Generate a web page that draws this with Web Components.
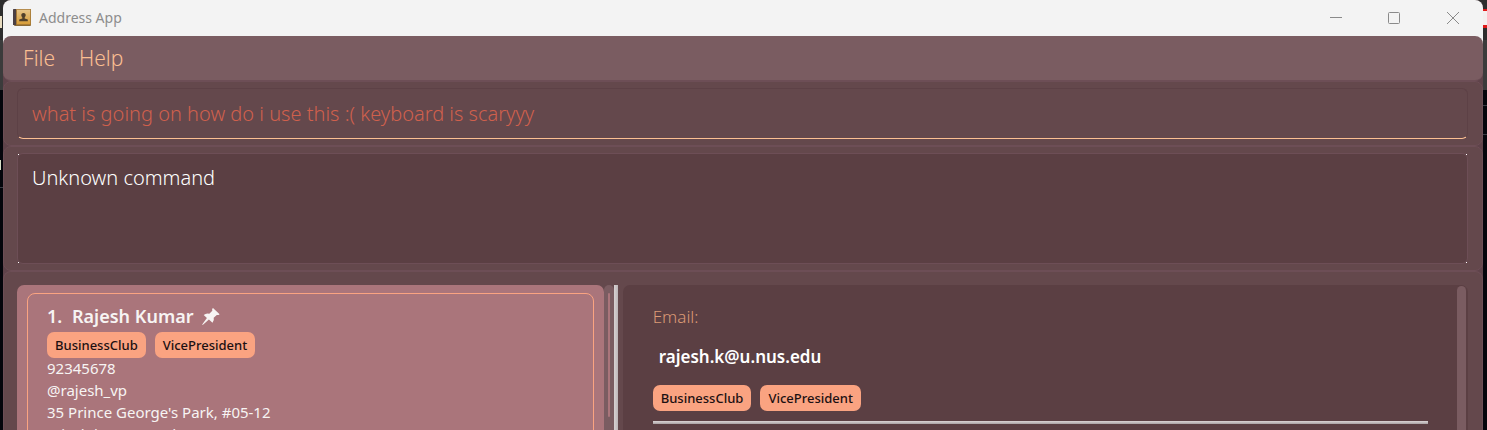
<!DOCTYPE html>
<html lang="en">
<head>
<meta charset="utf-8">
<title>Address App</title>
<style>
  html, body { height: 100%; margin: 0; }
  body {
    overflow: hidden;
    background:
      linear-gradient(#e8dcc0, #e8dcc0) 0 16px / 2px 12px no-repeat,
      linear-gradient(#d8e0c8, #d8e0c8) 0 160px / 1px 10px no-repeat,
      linear-gradient(#e01818 2px, #f4eeee 2px 16px, #e01818 16px) 100% 9px / 4px 19px no-repeat,
      linear-gradient(#3a3c44, #3a3c44) 100% 105px / 4px 1px no-repeat,
      linear-gradient(#3a3c44, #3a3c44) 100% 134px / 4px 1px no-repeat,
      linear-gradient(#3a3c44, #3a3c44) 0 187px / 3px 1px no-repeat,
      linear-gradient(#2d2d2d 0 40px, #3b3b3b 40px 90px, #04050b 90px);
    font-family: "Noto Sans", "Open Sans", sans-serif;
    --panel: #64484c;
    --panel-line: #6d4e56;
    --well: #5b3f43;
    --bar: #7a5c61;
    --card: #aa757b;
    --peach: #faa381;
    --cream: #f7f4f3;
  }
</style>
</head>
<body>
<app-window>
  <title-bar slot="title">Address App</title-bar>
  <menu-bar>
    <menu-item>File</menu-item>
    <menu-item>Help</menu-item>
  </menu-bar>
  <app-panel><command-box value="what is going on how do i use this :( keyboard is scaryyy"></command-box></app-panel>
  <app-panel><result-box value="Unknown command"></result-box></app-panel>
  <app-panel class="main">
    <split-pane>
      <person-list slot="left">
        <person-card index="1." name="Rajesh Kumar">
          <tag-chip slot="tags">BusinessClub</tag-chip>
          <tag-chip slot="tags">VicePresident</tag-chip>
          <div>92345678</div>
          <div>@rajesh_vp</div>
          <div>35 Prince George's Park, #05-12</div>
          <div>rajesh.k@u.nus.edu</div>
        </person-card>
      </person-list>
      <person-detail slot="right">
        <span slot="label">Email:</span>
        <span slot="value">rajesh.k@u.nus.edu</span>
        <tag-chip slot="tags">BusinessClub</tag-chip>
        <tag-chip slot="tags">VicePresident</tag-chip>
      </person-detail>
    </split-pane>
  </app-panel>
</app-window>

<script>
  const define = (name, markup, setup) => {
    const template = document.createElement('template');
    template.innerHTML = `<style>*{box-sizing:border-box}</style>${markup}`;
    customElements.define(name, class extends HTMLElement {
      constructor() {
        super();
        this.attachShadow({ mode: 'open' }).append(template.content.cloneNode(true));
      }
      connectedCallback() { if (setup) setup(this, this.shadowRoot); }
    });
  };

  define('app-window', `
    <style>
      :host { display: flex; flex-direction: column; height: 100vh; margin: 0 4px 0 3px;
        background: #5f434a; border-radius: 8px 8px 0 0; overflow: hidden; }
      ::slotted(.main) { flex: 1; min-height: 0; }
    </style>
    <slot name="title"></slot><slot></slot>`);

  define('title-bar', `
    <style>
      :host { display: flex; align-items: center; height: 36px; flex: none; background: #f3f3f3;
        color: #8d8d8d; font-size: 14px; line-height: 20px; }
      .icon { margin: 0 7px 0 10px; }
      h1 { flex: 1; margin: 0; font: inherit; }
      button { width: 58px; height: 36px; padding: 0; border: 0; background: none; display: grid; place-items: center; }
      svg { display: block; }
      .controls { display: flex; margin-right: 1px; }
    </style>
    <svg class="icon" width="19" height="18" viewBox="0 0 19 18" aria-hidden="true">
      <defs><linearGradient id="g" x2="0" y2="1"><stop stop-color="#e7c58a"/><stop offset="1" stop-color="#d79c36"/></linearGradient></defs>
      <rect x="1" y="1" width="17" height="16" rx="1" fill="#8b6a36"/>
      <rect y="0" width="3.6" height="16" rx=".6" fill="#4b4044"/>
      <rect x="3.6" y=".5" width="14" height="15" fill="url(#g)" stroke="#a87b35" stroke-width=".8"/>
      <path d="M10.500 4c1.700 0 2.300 1.100 2.200 2.300-.1 1.100-.6 1.700-1 2.200v.9l3.100 1.200v1.700H6.200v-1.700l3.100-1.200v-.9c-.4-.5-.9-1.100-1-2.200C8.200 5.100 8.800 4 10.500 4z" fill="#51402b"/>
    </svg>
    <h1><slot></slot></h1>
    <div class="controls">
      <button aria-label="Minimize"><svg width="14" height="14" fill="none" stroke="#8a8a8a"><path d="M0 6.500h12"/></svg></button>
      <button aria-label="Maximize"><svg width="14" height="14" fill="none" stroke="#8a8a8a"><rect x=".5" y="1.500" width="11" height="11" rx="1"/></svg></button>
      <button aria-label="Close"><svg width="14" height="14" fill="none" stroke="#8a8a8a"><path d="M1 1l12 12M13 1L1 13"/></svg></button>
    </div>`);

  define('menu-bar', `
    <style>
      :host { display: block; flex: none; background: linear-gradient(#f3f3f3 50%, #5f434a 50%); }
      nav { display: flex; height: 45px; padding: 0 8px; background: var(--bar); border-radius: 8px; border-bottom: 1px solid var(--panel-line); }
    </style>
    <nav><slot></slot></nav>`);

  define('menu-item', `
    <style>
      :host { display: flex; }
      button { border: 0; padding: 0 12px; background: none; color: #fcbf92; font-family: inherit; font-size: 21px; line-height: 44px; font-weight: 300; }
    </style>
    <button><slot></slot></button>`);

  define('app-panel', `
    <style>
      :host { display: block; flex: none; padding: 6px 14px 6px 13px; border: 1px solid var(--panel-line);
        border-radius: 8px; background: var(--panel); }
      :host(.main) { padding: 13px 14px 0 13px; border-bottom: 0; border-radius: 8px 8px 0 0; }
    </style>
    <slot></slot>`);

  define('command-box', `
    <style>
      :host { display: block; }
      input { display: block; width: 100%; height: 51px; padding: 0 14px; border: 1px solid #5d4146; border-bottom: 1px solid #fcbf92;
        border-radius: 6px; outline: 0; background: var(--panel); color: #d0604c;
        font-family: inherit; font-size: 20px; font-weight: 300; }
    </style>
    <input type="text" aria-label="Command">`,
    (host, root) => { root.querySelector('input').value = host.getAttribute('value'); });

  define('result-box', `
    <style>
      :host { display: block; --dot: linear-gradient(#fff, #fff) no-repeat;
        background:
          linear-gradient(#fff, #fff) left 1px top 1px / 1px 1px no-repeat,
          linear-gradient(#fff, #fff) right 1px top 1px / 1px 1px no-repeat,
          linear-gradient(#fff, #fff) left 1px bottom 1px / 1px 1px no-repeat,
          linear-gradient(#fff, #fff) right 1px bottom 1px / 1px 1px no-repeat; }
      textarea { display: block; width: 100%; height: 111px; padding: 9px 14px; border: 1px solid var(--panel-line);
        border-radius: 6px; outline: 0; resize: none; background: var(--well); color: #fff;
        font-family: inherit; font-size: 20px; line-height: 30px; font-weight: 300; }
    </style>
    <textarea readonly aria-label="Result"></textarea>`,
    (host, root) => { root.querySelector('textarea').value = host.getAttribute('value'); });

  define('split-pane', `
    <style>
      :host { display: grid; grid-template-columns: minmax(0, 12fr) 4px 5px minmax(0, 17fr); height: 100%; }
      .divider { background: linear-gradient(90deg, #d8d2d3, #bcb6b8); }
      ::slotted([slot=right]) { grid-column: 4; }
    </style>
    <slot name="left"></slot><div class="divider"></div><slot name="right"></slot>`);

  define('person-list', `
    <style>
      :host { display: flex; min-height: 0; overflow: hidden; }
      .rows { flex: 1; min-width: 0; height: max-content; padding: 8px 10px; background: var(--card); border-radius: 7px; }
      .track { width: 10px; padding: 8px 4px 13px; background: var(--bar); border-radius: 5px 5px 0 0; }
      .thumb { height: 100%; background: var(--card); border-radius: 1px; }
    </style>
    <div class="rows"><slot></slot></div>
    <div class="track"><div class="thumb"></div></div>`);

  define('person-card', `
    <style>
      :host { display: block; padding: 10px 19px; border: 1px solid #faa381; border-radius: 8px;
        color: var(--cream); font-size: 15px; line-height: 22px; }
      h2 { display: flex; align-items: center; margin: 0 0 4px; font-size: 18px; line-height: 24px; font-weight: 600; }
      .index { width: 25px; }
      svg { margin-left: 8px; }
      .tags { display: flex; gap: 9px; height: 25px; }
    </style>
    <h2><span class="index"></span><span class="name"></span>
      <svg width="18" height="17" viewBox="0 0 18 17" role="img" aria-label="Pinned" fill="currentColor"><path d="M11 0L17.600 6.200 16.600 7.100 14.800 6.900 11.700 9.800Q12.500 12.700 10.500 14.800L6.900 11.500 1 16.800 0 16.700 4.900 10 1.700 6.900Q4.300 4.700 7.300 5.700L10.300 2.800 10.100 1z"/></svg></h2>
    <div class="tags"><slot name="tags"></slot></div>
    <slot></slot>`,
    (host, root) => {
      root.querySelector('.index').textContent = host.getAttribute('index');
      root.querySelector('.name').textContent = host.getAttribute('name');
    });

  define('tag-chip', `
    <style>
      :host { display: block; flex: none; height: 26px; padding: 0 8px; border-radius: 7px; background: var(--peach);
        color: #1c1012; font-size: 13px; line-height: 26px; font-weight: 500; }
    </style>
    <slot></slot>`);

  define('person-detail', `
    <style>
      :host { display: flex; min-height: 0; padding-right: 2px; background: var(--well); border-radius: 7px 7px 0 0; }
      .body { flex: 1; min-width: 0; padding: 20px 29px 0 30px; }
      .label { color: #dc9a76; font-size: 17px; line-height: 24px; font-weight: 300; }
      .value { margin: 16px 6px; color: #fff; font-size: 17px; line-height: 24px; font-weight: 600; }
      .tags { display: flex; gap: 9px; }
      hr { height: 3px; margin: 10px 0; border: 0; background: linear-gradient(#dcd6d7, #a9a1a3); }
      .track { width: 9px; margin-top: 1px; background: var(--bar); border-radius: 5px 5px 0 0; }
    </style>
    <div class="body">
      <div class="label"><slot name="label"></slot></div>
      <div class="value"><slot name="value"></slot></div>
      <div class="tags"><slot name="tags"></slot></div>
      <hr>
    </div>
    <div class="track"></div>`);
</script>
</body>
</html>
